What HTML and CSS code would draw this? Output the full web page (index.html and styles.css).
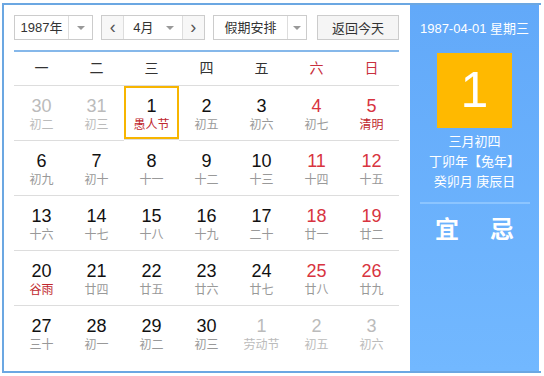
FILE: index.html
```html
<!DOCTYPE html>
<html lang="zh-CN">
<head>
    <meta charset="UTF-8">
    <title>万年历</title>
    <link rel="stylesheet" href="styles.css">
</head>
<body>
    <div class="calendar">
        <div class="main">
            <div class="toolbar">
                <div class="select year">
                    <span class="select-text">1987年</span>
                    <span class="select-arrow"><i class="caret"></i></span>
                </div>
                <div class="select month">
                    <span class="nav">&lsaquo;</span>
                    <span class="select-text">4月</span>
                    <span class="month-arrow"><i class="caret"></i></span>
                    <span class="nav next">&rsaquo;</span>
                </div>
                <div class="select holiday">
                    <span class="select-text">假期安排</span>
                    <span class="select-arrow"><i class="caret"></i></span>
                </div>
                <button class="today-btn">返回今天</button>
            </div>

            <div class="weekdays">
                <span>一</span><span>二</span><span>三</span><span>四</span><span>五</span>
                <span class="weekend">六</span><span class="weekend">日</span>
            </div>

            <div class="days">
                <div class="day other"><b>30</b><small>初二</small></div>
                <div class="day other"><b>31</b><small>初三</small></div>
                <div class="day today"><b>1</b><small class="fest">愚人节</small></div>
                <div class="day"><b>2</b><small>初五</small></div>
                <div class="day"><b>3</b><small>初六</small></div>
                <div class="day weekend"><b>4</b><small>初七</small></div>
                <div class="day weekend"><b>5</b><small class="fest">清明</small></div>

                <div class="day"><b>6</b><small>初九</small></div>
                <div class="day"><b>7</b><small>初十</small></div>
                <div class="day"><b>8</b><small>十一</small></div>
                <div class="day"><b>9</b><small>十二</small></div>
                <div class="day"><b>10</b><small>十三</small></div>
                <div class="day weekend"><b>11</b><small>十四</small></div>
                <div class="day weekend"><b>12</b><small>十五</small></div>

                <div class="day"><b>13</b><small>十六</small></div>
                <div class="day"><b>14</b><small>十七</small></div>
                <div class="day"><b>15</b><small>十八</small></div>
                <div class="day"><b>16</b><small>十九</small></div>
                <div class="day"><b>17</b><small>二十</small></div>
                <div class="day weekend"><b>18</b><small>廿一</small></div>
                <div class="day weekend"><b>19</b><small>廿二</small></div>

                <div class="day"><b>20</b><small class="fest">谷雨</small></div>
                <div class="day"><b>21</b><small>廿四</small></div>
                <div class="day"><b>22</b><small>廿五</small></div>
                <div class="day"><b>23</b><small>廿六</small></div>
                <div class="day"><b>24</b><small>廿七</small></div>
                <div class="day weekend"><b>25</b><small>廿八</small></div>
                <div class="day weekend"><b>26</b><small>廿九</small></div>

                <div class="day last"><b>27</b><small>三十</small></div>
                <div class="day last"><b>28</b><small>初一</small></div>
                <div class="day last"><b>29</b><small>初二</small></div>
                <div class="day last"><b>30</b><small>初三</small></div>
                <div class="day last other"><b>1</b><small>劳动节</small></div>
                <div class="day last other"><b>2</b><small>初五</small></div>
                <div class="day last other"><b>3</b><small>初六</small></div>
            </div>
        </div>

        <div class="side">
            <div class="side-date">1987-04-01 星期三</div>
            <div class="big-day">1</div>
            <div class="lunar">
                <div>三月初四</div>
                <div>丁卯年【兔年】</div>
                <div>癸卯月 庚辰日</div>
            </div>
            <div class="yiji">
                <span>宜</span>
                <span>忌</span>
            </div>
        </div>
    </div>
</body>
</html>
```

FILE: styles.css
```css
body {
    margin: 0;
    font-family: "Liberation Sans", "Noto Sans CJK SC", sans-serif;
    color: #333;
    background: #fff;
}
.calendar {
    display: flex;
    width: 537px;
    height: 366px;
    margin: 3px 0 0 2px;
    border: 2px solid #6ba7e2;
    border-right: none;
}
.main {
    width: 385px;
    padding: 10px 11px 0 10px;
}

/* toolbar */
.toolbar {
    display: flex;
    height: 25px;
    font-size: 13px;
}
.select {
    display: flex;
    box-sizing: border-box;
    height: 25px;
    border: 1px solid #ccc;
    background: #fff;
    line-height: 23px;
}
.select-text {
    flex: 1;
    text-align: center;
    color: #333;
}
.select-arrow {
    display: flex;
    align-items: center;
    justify-content: center;
    border-left: 1px solid #ddd;
}
.caret {
    width: 0;
    height: 0;
    border-left: 4px solid transparent;
    border-right: 4px solid transparent;
    border-top: 4px solid #999;
}
.year { width: 79px; margin-right: 8px; }
.year .select-arrow { width: 23px; }
.month { width: 104px; margin-right: 8px; }
.month .select-text { flex: none; width: 30px; padding-left: 4px; }
.month-arrow {
    display: flex;
    align-items: center;
    justify-content: center;
    width: 24px;
}
.nav {
    width: 22px;
    text-align: center;
    background: #f7f7f7;
    border-right: 1px solid #ddd;
    font-size: 18px;
    color: #555;
}
.nav.next {
    border-right: none;
    border-left: 1px solid #ddd;
}
.holiday { width: 94px; margin-right: 10px; }
.holiday .select-arrow { width: 18px; }
.today-btn {
    width: 82px;
    height: 25px;
    padding: 0;
    border: 1px solid #ccc;
    background: #f5f5f5;
    font-family: inherit;
    font-size: 13px;
    color: #333;
}

/* grid */
.weekdays {
    display: grid;
    grid-template-columns: repeat(7, 55px);
    margin-top: 10px;
    border-top: 2px solid #86b8ea;
    border-bottom: 1px solid #ddd;
    height: 33px;
    line-height: 33px;
    text-align: center;
    font-size: 14px;
    color: #333;
}
.weekdays .weekend { color: #c8303e; }
.days {
    display: grid;
    grid-template-columns: repeat(7, 55px);
}
.day {
    display: flex;
    flex-direction: column;
    align-items: center;
    height: 54px;
    padding-top: 10px;
    box-sizing: border-box;
    border-bottom: 1px solid #ddd;
    height: 55px;
}
.day.last { border-bottom: none; }
.day b {
    font-weight: normal;
    font-size: 18px;
    line-height: 20px;
    color: #111;
}
.day small {
    margin-top: 1px;
    font-size: 12px;
    line-height: 16px;
    color: #999;
}
.day.weekend b { color: #d8343f; }
.day small.fest { color: #c0282e; }
.day.other b { color: #bbb; }
.day.other small { color: #bbb; }
.day.today {
    box-shadow: inset 0 0 0 2px #f7b500;
    height: 54px;
}

/* side panel */
.side {
    width: 129px;
    display: flex;
    flex-direction: column;
    align-items: center;
    background: linear-gradient(#62a9f9, #72b8ff);
    color: #fff;
}
.side-date {
    margin-top: 16px;
    font-size: 13px;
    line-height: 16px;
}
.big-day {
    width: 75px;
    height: 75px;
    margin-top: 16px;
    background: #ffb900;
    font-size: 50px;
    line-height: 75px;
    text-align: center;
}
.lunar {
    margin-top: 4px;
    font-size: 13px;
    line-height: 20px;
    text-align: center;
    width: 110px;
    padding-bottom: 10px;
    border-bottom: 2px solid #8cc5ff;
}
.yiji {
    display: flex;
    gap: 31px;
    margin-top: 12px;
    font-size: 24px;
    font-weight: bold;
    line-height: 28px;
}
```
